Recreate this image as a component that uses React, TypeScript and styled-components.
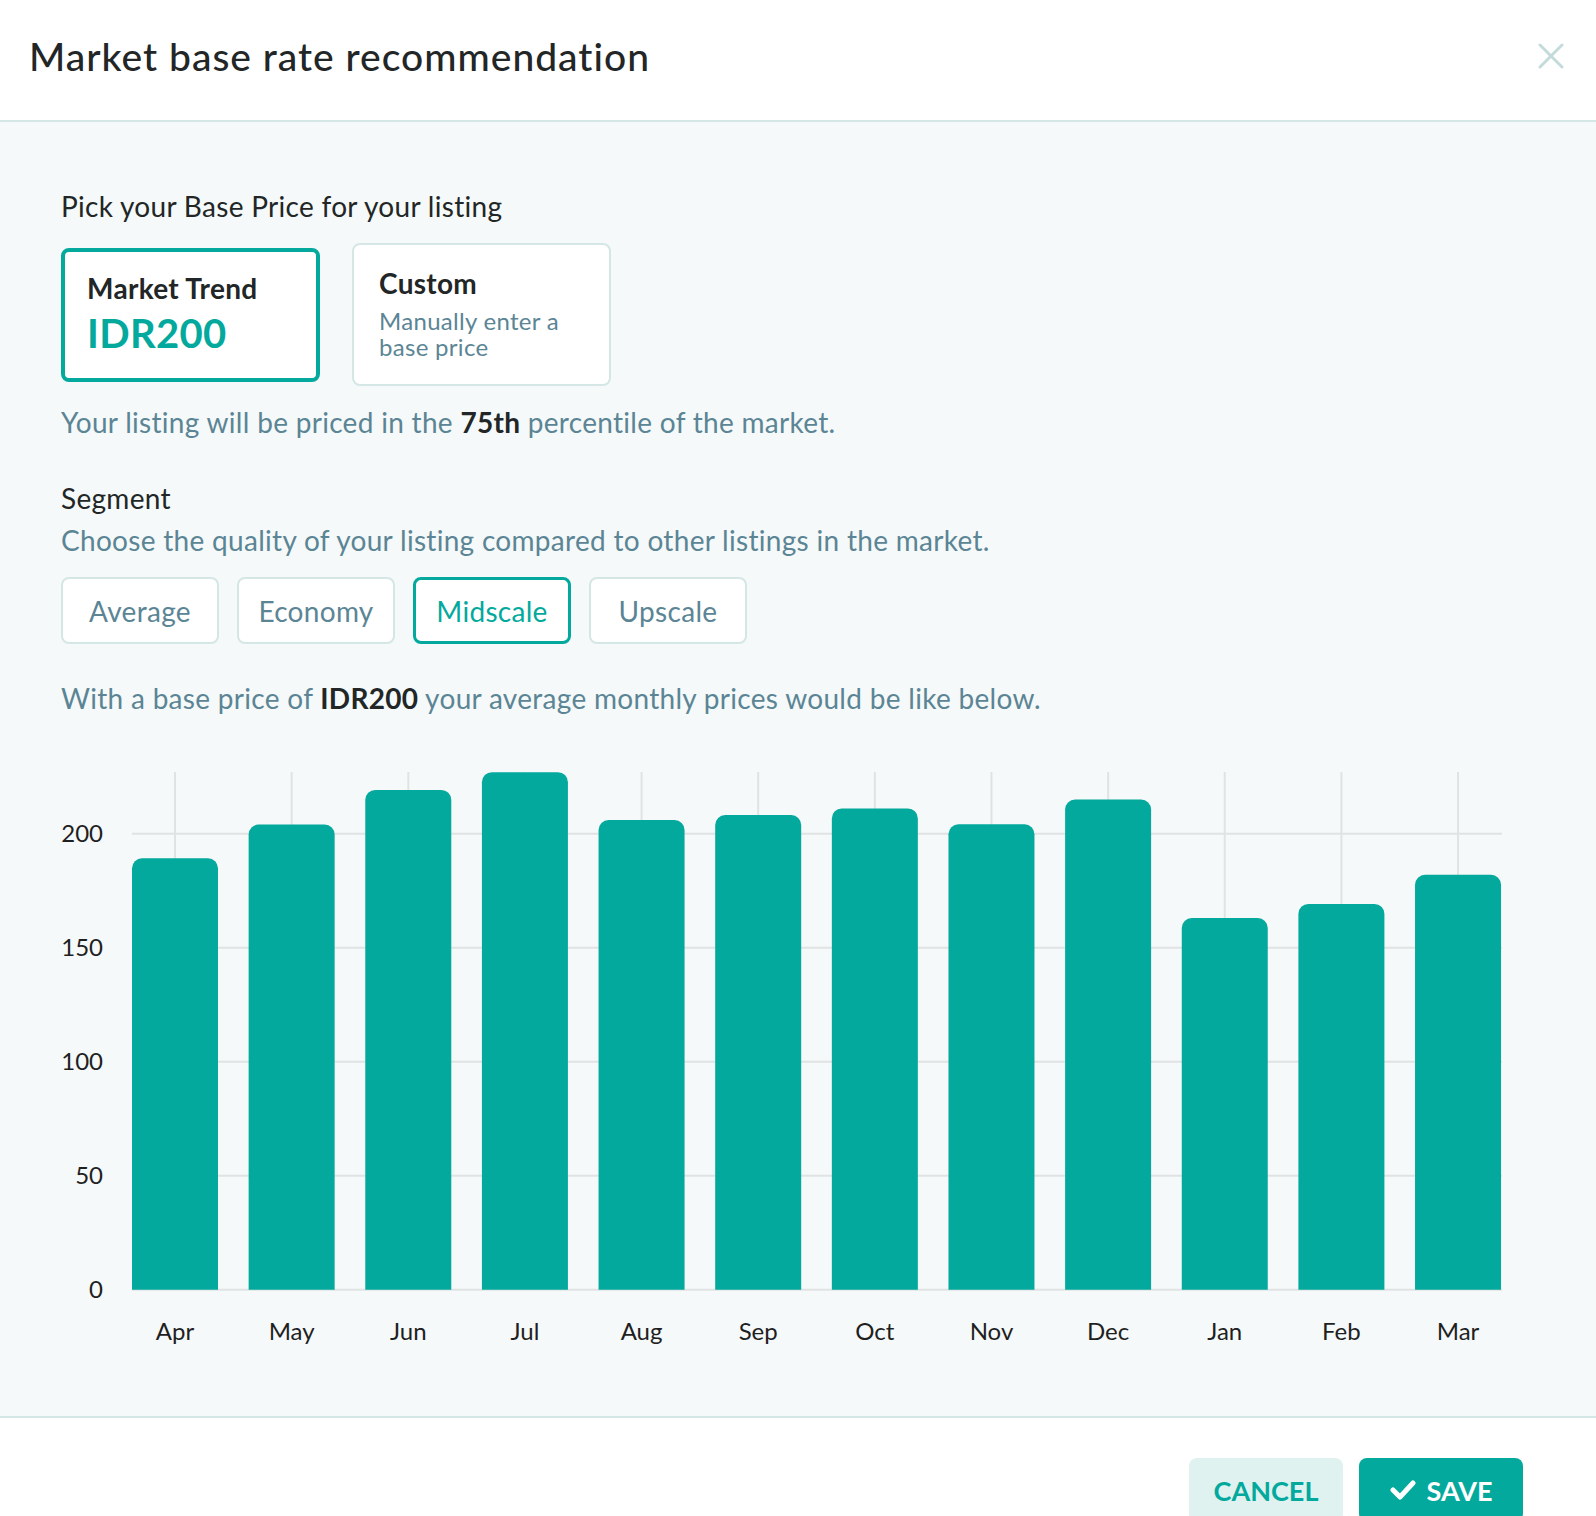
import React from 'react';
import styled, { createGlobalStyle } from 'styled-components';

const TEAL = '#03a99c';
const MUTED = '#5b8595';
const LINE = '#d4e7e5';
const DARK = '#222626';

const GlobalStyle = createGlobalStyle`
  html, body { margin: 0; padding: 0; background: #ffffff; }
  body {
    font-family: Lato, "Noto Sans", "Liberation Sans", sans-serif;
    color: ${DARK};
    -webkit-font-smoothing: antialiased;
  }
  * { box-sizing: border-box; }
`;

const Modal = styled.div`
  width: 1596px;
  display: flex;
  flex-direction: column;
  background: #ffffff;
`;

const Header = styled.header`
  height: 122px;
  display: flex;
  align-items: center;
  justify-content: space-between;
  padding: 0 32px 8px 29px;
  border-bottom: 2px solid ${LINE};
`;

const Title = styled.h1`
  margin: 0;
  font-size: 39px;
  line-height: 46px;
  font-weight: 500;
  letter-spacing: 1px;
  color: ${DARK};
`;

const CloseButton = styled.button`
  width: 26px;
  height: 26px;
  padding: 0;
  border: none;
  background: transparent;
  display: flex;
  cursor: pointer;
`;

const Body = styled.main`
  background: #f5f9f9;
  padding: 65px 94px 64px 61px;
  border-bottom: 2px solid ${LINE};
  display: flex;
  flex-direction: column;
  letter-spacing: 0.3px;
`;

const Label = styled.div<{ $lh?: number; $mt?: number }>`
  margin-top: ${(p) => p.$mt ?? 0}px;
  font-size: 28px;
  line-height: ${(p) => p.$lh ?? 38}px;
  color: ${DARK};
`;

const Muted = styled.p<{ $mt?: number; $lh?: number }>`
  margin: ${(p) => p.$mt ?? 0}px 0 0;
  font-size: 28px;
  line-height: ${(p) => p.$lh ?? 38}px;
  color: ${MUTED};
  b { color: ${DARK}; font-weight: 700; }
`;

const CardRow = styled.div`
  display: flex;
  align-items: center;
  gap: 32px;
  margin-top: 18px;
  height: 143px;
`;

const Card = styled.div<{ $active?: boolean }>`
  width: 259px;
  height: ${(p) => (p.$active ? 134 : 143)}px;
  background: #ffffff;
  border: ${(p) => (p.$active ? `4px solid ${TEAL}` : `2px solid ${LINE}`)};
  border-radius: 8px;
  padding: ${(p) => (p.$active ? '18px 22px' : '20px 25px')};
  display: flex;
  flex-direction: column;
`;

const CardTitle = styled.div`
  font-size: 28px;
  line-height: 36px;
  font-weight: 700;
  color: ${DARK};
`;

const CardPrice = styled.div`
  margin-top: 3px;
  font-size: 40px;
  line-height: 48px;
  font-weight: 700;
  color: ${TEAL};
`;

const CardHint = styled.div`
  margin-top: 7px;
  font-size: 24px;
  line-height: 26px;
  color: ${MUTED};
`;

const SegmentRow = styled.div`
  display: flex;
  gap: 18px;
  margin-top: 16px;
`;

const SegmentButton = styled.button<{ $active?: boolean }>`
  width: 158px;
  height: 67px;
  padding: 0;
  background: #ffffff;
  border: ${(p) => (p.$active ? `3px solid ${TEAL}` : `2px solid ${LINE}`)};
  border-radius: 8px;
  font-family: inherit;
  font-size: 28px;
  letter-spacing: 0.3px;
  color: ${(p) => (p.$active ? TEAL : MUTED)};
  cursor: pointer;
`;

const ChartSvg = styled.svg`
  display: block;
  margin-top: 55px;
  overflow: visible;
  letter-spacing: 0;
  text {
    font-family: Lato, "Noto Sans", sans-serif;
    font-size: 24px;
    fill: #1f1f1f;
  }
`;

const Footer = styled.footer`
  display: flex;
  justify-content: flex-end;
  gap: 16px;
  padding: 40px 73px 0 0;
  background: #ffffff;
`;

const ActionButton = styled.button<{ $primary?: boolean }>`
  width: ${(p) => (p.$primary ? 164 : 154)}px;
  height: 64px;
  border: none;
  border-radius: 8px;
  display: inline-flex;
  align-items: center;
  justify-content: center;
  gap: 11px;
  font-family: inherit;
  font-size: 27px;
  font-weight: 700;
  letter-spacing: 0;
  background: ${(p) => (p.$primary ? TEAL : '#dff2f0')};
  color: ${(p) => (p.$primary ? '#ffffff' : TEAL)};
  cursor: pointer;
`;

const data: [string, number][] = [
  ['Apr', 189.2],
  ['May', 204],
  ['Jun', 219.2],
  ['Jul', 227],
  ['Aug', 206],
  ['Sep', 208.2],
  ['Oct', 211.1],
  ['Nov', 204.1],
  ['Dec', 215],
  ['Jan', 163],
  ['Feb', 169.2],
  ['Mar', 182],
];

const PL = 71;
const PR = 1441;
const Y0 = 517.7;
const TOP = 0;
const K = 2.28;
const STEP = 116.64;
const BW = 86;
const R = 10;

function barPath(x: number, y: number) {
  return `M${x},${Y0} L${x},${y + R} A${R},${R} 0 0 1 ${x + R},${y} L${x + BW - R},${y} A${R},${R} 0 0 1 ${x + BW},${y + R} L${x + BW},${Y0} Z`;
}

function Chart() {
  const ticks = [0, 50, 100, 150, 200];
  return (
    <ChartSvg width={1441} height={580} viewBox="0 0 1441 580">
      {ticks.map((t) => {
        const y = Y0 - t * K;
        return (
          <g key={t}>
            <line x1={PL} x2={PR} y1={y} y2={y} stroke="#e1e3e3" strokeWidth={2} />
            <text x={42} y={y + 8.6} textAnchor="end">
              {t}
            </text>
          </g>
        );
      })}
      {data.map(([m], i) => {
        const cx = PL + i * STEP + BW / 2;
        return <line key={m} x1={cx} x2={cx} y1={TOP} y2={Y0} stroke="#e1e3e3" strokeWidth={2} />;
      })}
      {data.map(([m, v], i) => {
        const x = PL + i * STEP;
        const cx = x + BW / 2;
        return (
          <g key={m}>
            <path d={barPath(x, Y0 - v * K)} fill={TEAL} />
            <text x={cx} y={Y0 + 50.4} textAnchor="middle">
              {m}
            </text>
          </g>
        );
      })}
    </ChartSvg>
  );
}

export default function App() {
  return (
    <>
      <GlobalStyle />
      <Modal>
        <Header>
          <Title>Market base rate recommendation</Title>
          <CloseButton aria-label="Close">
            <svg width="26" height="26" viewBox="0 0 26 26">
              <path d="M2 2 L24 24 M24 2 L2 24" stroke="#c4dcd9" strokeWidth="3" strokeLinecap="round" />
            </svg>
          </CloseButton>
        </Header>
        <Body>
          <Label>Pick your Base Price for your listing</Label>
          <CardRow>
            <Card $active>
              <CardTitle>Market Trend</CardTitle>
              <CardPrice>IDR200</CardPrice>
            </Card>
            <Card>
              <CardTitle>Custom</CardTitle>
              <CardHint>
                Manually enter a
                <br />
                base price
              </CardHint>
            </Card>
          </CardRow>
          <Muted $mt={17}>
            Your listing will be priced in the <b>75th</b> percentile of the market.
          </Muted>
          <Label $lh={42} $mt={36}>
            Segment
          </Label>
          <Muted $lh={42}>Choose the quality of your listing compared to other listings in the market.</Muted>
          <SegmentRow>
            <SegmentButton>Average</SegmentButton>
            <SegmentButton>Economy</SegmentButton>
            <SegmentButton $active>Midscale</SegmentButton>
            <SegmentButton>Upscale</SegmentButton>
          </SegmentRow>
          <Muted $mt={35}>
            With a base price of <b>IDR200</b> your average monthly prices would be like below.
          </Muted>
          <Chart />
        </Body>
        <Footer>
          <ActionButton>CANCEL</ActionButton>
          <ActionButton $primary>
            <svg width="26" height="20" viewBox="0 0 26 20">
              <polyline points="3,10 10,17 23,3" fill="none" stroke="#ffffff" strokeWidth="5" strokeLinecap="round" strokeLinejoin="round" />
            </svg>
            SAVE
          </ActionButton>
        </Footer>
      </Modal>
    </>
  );
}
